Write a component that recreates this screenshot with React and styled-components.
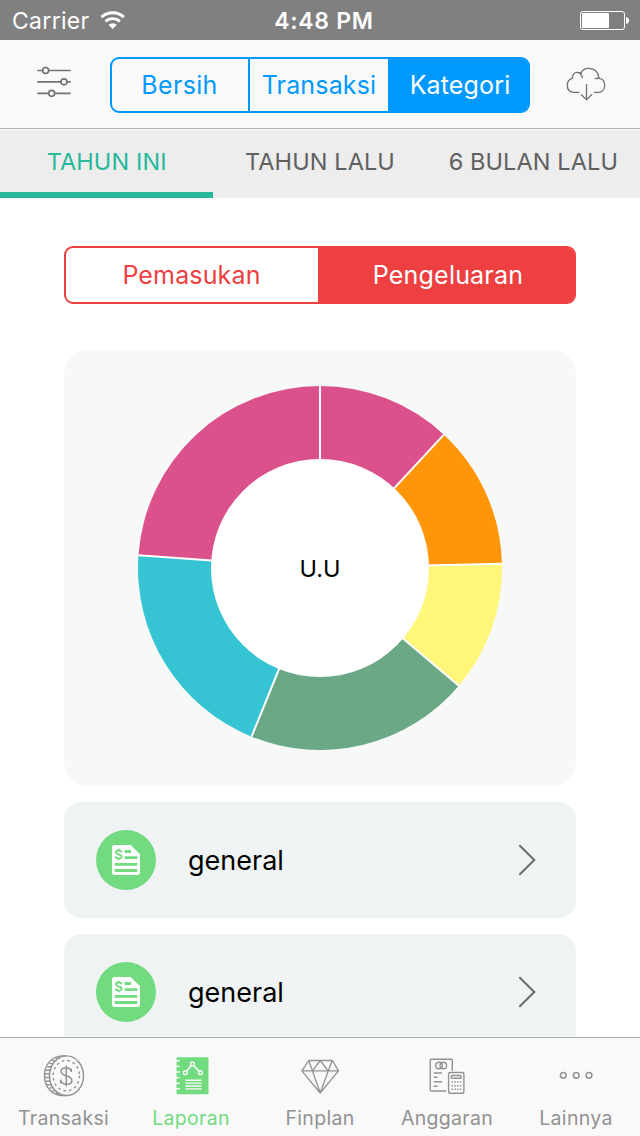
import React from "react";
import styled, { createGlobalStyle } from "styled-components";

const GlobalStyle = createGlobalStyle`
  * { box-sizing: border-box; }
  body { margin: 0; background: #fff; }
  button { font: inherit; background: none; border: 0; padding: 0; margin: 0; color: inherit; }
  svg { display: block; flex: none; }
`;

const Screen = styled.div`
  width: 640px;
  height: 1136px;
  display: flex;
  flex-direction: column;
  overflow: hidden;
  background: #fff;
  font-family: Inter, "Liberation Sans", sans-serif;
  font-weight: 400;
`;

const StatusBar = styled.header`
  flex: none;
  height: 40px;
  padding: 0 11px 0 12px;
  display: grid;
  grid-template-columns: 1fr auto 1fr;
  align-items: center;
  background: #808080;
  color: #fff;
  font-size: 23px;
  line-height: 38px;
`;

const Carrier = styled.div`
  display: flex;
  align-items: center;
  gap: 10px;
  letter-spacing: 0.3px;
  & > span { padding-top: 2px; }
`;

const Clock = styled.div`
  padding: 2px 0 0 7px;
  font-weight: 600;
  letter-spacing: 0.7px;
`;

const BatterySlot = styled.div`
  justify-self: end;
`;

const NavBar = styled.nav`
  flex: none;
  height: 89px;
  padding: 17px 33px 0 36px;
  display: flex;
  align-items: flex-start;
  background: #f9f9f9;
  border-bottom: 1px solid #b2b2b2;
`;

const IconButton = styled.button`
  margin-top: ${(p) => p.$top}px;
  &:first-child { margin-right: 38px; }
  &:last-child { margin-left: auto; }
`;

const Segments = styled.div`
  flex: none;
  display: flex;
  width: ${(p) => p.$width}px;
  height: ${(p) => p.$height}px;
  border: 2px solid ${(p) => p.$color};
  border-radius: 9px;
  color: ${(p) => p.$color};
  font-size: 25px;
`;

const Segment = styled.button`
  flex: none;
  width: ${(p) => p.$width}px;
  display: flex;
  align-items: center;
  justify-content: center;
  letter-spacing: ${(p) => p.$spacing || 0}px;
  padding-left: ${(p) => (p.$active ? 2 : 0)}px;
  background: ${(p) => (p.$active ? p.$color : "transparent")};
  color: ${(p) => (p.$active ? "#fff" : p.$color)};
  &:not(:first-child) { border-left: 2px solid ${(p) => p.$color}; }
  &:first-child { padding-right: 1px; }
  &:last-child { border-radius: 0 6px 6px 0; }
`;

const PeriodTabs = styled.div`
  flex: none;
  height: 69px;
  border-top: 1px solid #f9f9f9;
  display: grid;
  grid-template-columns: repeat(3, 1fr);
  background: #ededed;
`;

const PeriodTab = styled.button`
  height: 68px;
  padding: 1px 0 ${(p) => (p.$active ? 0 : 6)}px;
  border-bottom: ${(p) => (p.$active ? "6px solid #26b99a" : "0")};
  display: flex;
  align-items: center;
  justify-content: center;
  color: ${(p) => (p.$active ? "#26b99a" : "#606060")};
  font-size: 23.5px;
  letter-spacing: 0.1px;
`;

const Content = styled.main`
  flex: 1;
  min-height: 0;
  overflow: hidden;
  padding: 48px 64px 0;
  display: flex;
  flex-direction: column;
`;

const ChartCard = styled.section`
  flex: none;
  margin-top: 46px;
  height: 436px;
  border-radius: 24px;
  background: #f7f9f8;
  display: grid;
  place-items: center;
  & > * { grid-area: 1 / 1; }
`;

const ChartLabel = styled.div`
  padding-top: 1px;
  color: #000;
  font-size: 23.5px;
`;

const CategoryRow = styled.button`
  flex: none;
  height: 116px;
  margin-top: 16px;
  padding: 0 40px 0 32px;
  border-radius: 17px;
  background: #eff3f4;
  display: flex;
  align-items: center;
`;

const CategoryName = styled.span`
  flex: 1;
  margin-left: 32px;
  text-align: left;
  color: #000;
  font-size: 27px;
`;

const TabBar = styled.footer`
  flex: none;
  height: 99px;
  border-top: 1px solid #a9adae;
  background: #f9f9f9;
  display: grid;
  grid-template-columns: repeat(5, 1fr);
`;

const TabItem = styled.button`
  display: flex;
  flex-direction: column;
  align-items: center;
  padding-top: 16px;
  color: ${(p) => (p.$active ? "#72db80" : "#929292")};
`;

const TabLabel = styled.span`
  margin: 7px ${(p) => p.$trail || 0}px 0 0;
  font-size: 19.5px;
  line-height: 26px;
  letter-spacing: 0.32px;
`;

const WifiIcon = () => (
  <svg width="25.33" height="20" viewBox="0 0 76 60" fill="none" stroke="#fff">
    <path d="M4.3 21.5A49 49 0 0 1 71.7 21.5" strokeWidth="9" />
    <path d="M16.5 34.5A31 31 0 0 1 59.5 34.5" strokeWidth="8.5" />
    <path d="M38 57L25.5 44.5A18 18 0 0 1 50.5 44.5Z" fill="#fff" stroke="none" />
  </svg>
);

const BatteryIcon = () => (
  <svg width="49" height="20" viewBox="0 0 49 20">
    <rect x="0.5" y="1.5" width="44" height="18" rx="2.5" fill="none" stroke="#fff" />
    <rect x="2" y="3" width="27" height="15" rx="1" fill="#fff" />
    <path d="M46 7Q49 7.5 49 10.5Q49 13.5 46 14Z" fill="#fff" />
  </svg>
);

const SlidersIcon = () => (
  <svg width="36" height="33" viewBox="0 0 108 99" fill="none" stroke="#737373" strokeWidth="5">
    <path d="M4 13.500H20M38 13.500H104M4 47.500H75M93 47.500H104M4 82H38M56 82H104" />
    <circle cx="29" cy="13.500" r="9" />
    <circle cx="84" cy="47.500" r="9" />
    <circle cx="47" cy="82" r="9" />
  </svg>
);

const CloudIcon = () => (
  <svg width="42" height="37" viewBox="0 0 126 111" fill="none" stroke="#737373" strokeWidth="4" strokeLinecap="round">
    <path d="M42 82H27C14 82 7 73 7 61C7 49 13 42 22 40C22 29 29 21 37 22C41 22 45 23 48 25C52 14 61 10 71 10C89 10 101 22 102 40C112 41 119 49 119 61C119 73 112 82 101 82H88" />
    <path d="M37 22Q50 24 52 38M91 41Q97 39 103 40" />
    <path d="M64.500 59V103M49 89L64.500 104L80 89" />
  </svg>
);

const polar = (deg, r) => {
  const a = (deg * Math.PI) / 180;
  return `${(182 + r * Math.sin(a)).toFixed(2)} ${(182 - r * Math.cos(a)).toFixed(2)}`;
};

const slices = [
  { from: 0, to: 42.9, color: "#da518b" },
  { from: 42.9, to: 88.7, color: "#ff9508" },
  { from: 88.7, to: 130.3, color: "#fff67a" },
  { from: 130.3, to: 202.1, color: "#6aa886" },
  { from: 202.1, to: 274, color: "#36c3d3" },
  { from: 274, to: 360, color: "#da518b" },
];

const Donut = () => (
  <svg width="364" height="364" viewBox="0 0 364 364">
    {slices.map((s) => (
      <path
        key={s.from}
        fill={s.color}
        d={`M${polar(s.from, 108)}L${polar(s.from, 182)}A182 182 0 0 1 ${polar(s.to, 182)}L${polar(s.to, 108)}A108 108 0 0 0 ${polar(s.from, 108)}Z`}
      />
    ))}
    {slices.map((s) => (
      <path key={s.from} stroke="#fff" strokeWidth="2" d={`M${polar(s.from, 105)}L${polar(s.from, 182)}`} />
    ))}
    <circle cx="182" cy="182" r="109" fill="#fff" />
  </svg>
);

const BillIcon = () => (
  <svg width="60" height="60" viewBox="0 0 180 180">
    <circle cx="90" cy="90" r="90" fill="#72db80" />
    <path d="M55 45H104L132 73V127Q132 135 124 135H56Q48 135 48 127V53Q48 45 55 45Z" fill="#fff" />
    <path d="M86 64.500H105M86 83H124M56 103H124M56 121.500H124" stroke="#72db80" strokeWidth="8.500" />
    <path
      d="M77 67Q76 61.500 68 61.500Q60 61.500 60 67Q60 71.500 68 73.500Q77 75.500 77 80Q77 85.500 68 85.500Q59 85.500 58.500 79.500M68 56V61M68 86V91"
      fill="none"
      stroke="#72db80"
      strokeWidth="5.500"
    />
  </svg>
);

const ChevronIcon = () => (
  <svg width="18" height="32" viewBox="0 0 18 32" fill="none" stroke="#6b6b6b" strokeWidth="2" strokeLinecap="round">
    <path d="M1.900 1.700L16.300 16L1.900 30.300" />
  </svg>
);

const CoinIcon = () => (
  <svg width="44" height="44" viewBox="0 0 44 44" fill="none" stroke="currentColor" strokeWidth="1.400">
    <ellipse cx="24.500" cy="21.700" rx="17" ry="19.800" />
    <path d="M24.500 1.900H20C10 2.500 2.500 10 2.500 21.700S10 41 20 41.500H24.500" />
    <path d="M13.500 4.200L18 4.200M10 6.600L14.500 6.600M7.300 9.600L11.600 9.600M5.300 12.800L9.600 12.800M3.700 16.200L8.200 16.200M2.700 19.800L7.500 19.800M2.700 23.500L7.500 23.500M3.500 27.200L8.200 27.200M5 30.700L9.600 30.700M7.300 33.900L11.600 33.900M10 36.900L14.500 36.900M13.500 39.300L18 39.300" />
    <ellipse cx="24.300" cy="21.700" rx="13.200" ry="15.200" strokeDasharray="2.600 3.030" />
    <path d="M29.300 18V14.800M29.300 17.500C28.600 14.700 26.700 13.700 24.200 13.700C21 13.700 19 15.200 19 17.500C19 20.200 21.500 20.900 24.200 21.700C27.500 22.600 29.900 23.500 29.900 26.400C29.900 28.900 27.600 30.300 24.500 30.300C21.300 30.300 19.300 28.900 18.700 25.900M18.700 25.600V29.600M24.300 11.700V32.200" strokeWidth="1.500" />
  </svg>
);

const ReportIcon = () => (
  <svg width="44" height="44" viewBox="0 0 44 44" fill="none" stroke="#f9f9f9" strokeWidth="1.400">
    <rect x="6.500" y="3.300" width="32" height="37" rx="0.800" fill="currentColor" stroke="none" />
    <path d="M6 6.800H9.200M6 12.400H9.200M6 18H9.200M6 23.600H9.200M6 29.200H9.200M6 34.800H9.200" strokeLinecap="round" />
    <path d="M16.500 17.300L21.200 11.500M23.600 11.300L29 17.300" strokeWidth="1.700" />
    <circle cx="15.300" cy="18.700" r="1.900" />
    <circle cx="22.400" cy="9.900" r="1.900" />
    <circle cx="30.500" cy="18.700" r="1.900" />
    <path d="M15.300 26.200H31.700M15.300 29.100H31.700M15.300 32H31.700M15.300 34.900H31.700" />
  </svg>
);

const DiamondIcon = () => (
  <svg width="44" height="44" viewBox="0 0 44 44" fill="none" stroke="currentColor" strokeWidth="1.300" strokeLinejoin="round">
    <path d="M10.700 6.500H34.300L40.500 16.800L22.200 39L3.900 16.800ZM3.900 16.800H40.500M10.700 6.500L14.400 16.800L22.300 6.500L30.300 16.800L34.300 6.500M14.400 16.800L22.200 39L30.300 16.800" />
  </svg>
);

const BudgetIcon = () => (
  <svg width="44" height="44" viewBox="0 0 44 44" fill="none" stroke="currentColor" strokeWidth="1.400">
    <path d="M26.300 17V6.500Q26.300 5.300 25.100 5.300H5.400Q4.200 5.300 4.200 6.500V35.800Q4.200 37 5.400 37H20" />
    <circle cx="13" cy="11.500" r="3.300" />
    <circle cx="17.300" cy="11.500" r="3.300" />
    <path d="M7.700 19H16M7.700 23.300H11.700M7.700 27.700H16M7.700 32.300H11.700" />
    <rect x="22.600" y="18.500" width="15.300" height="20.700" rx="1.500" />
    <rect x="25.300" y="21.500" width="9.800" height="2.800" rx="0.800" />
    <path d="M25.500 28H36M25.500 31.700H36M25.500 35.300H36" strokeWidth="1.500" strokeDasharray="1.500 1.300" />
  </svg>
);

const MoreIcon = () => (
  <svg width="44" height="44" viewBox="0 0 44 44" fill="none" stroke="currentColor" strokeWidth="1.500">
    <circle cx="9.300" cy="21.300" r="2.900" />
    <circle cx="22.200" cy="21.300" r="2.900" />
    <circle cx="35" cy="21.300" r="2.900" />
  </svg>
);

const BLUE = "#0099ff";
const RED = "#ee4041";

const tabs = [
  { label: "Transaksi", Icon: CoinIcon, trail: 1 },
  { label: "Laporan", Icon: ReportIcon, trail: 2, active: true },
  { label: "Finplan", Icon: DiamondIcon },
  { label: "Anggaran", Icon: BudgetIcon, trail: 2 },
  { label: "Lainnya", Icon: MoreIcon },
];

export default function App() {
  return (
    <Screen>
      <GlobalStyle />
      <StatusBar>
        <Carrier>
          <span>Carrier</span>
          <WifiIcon />
        </Carrier>
        <Clock>4:48 PM</Clock>
        <BatterySlot>
          <BatteryIcon />
        </BatterySlot>
      </StatusBar>
      <NavBar>
        <IconButton $top={9} aria-label="Filter">
          <SlidersIcon />
        </IconButton>
        <Segments $width={420} $height={56} $color={BLUE}>
          <Segment $color={BLUE} $width={136} $spacing={0.35}>Bersih</Segment>
          <Segment $color={BLUE} $width={140} $spacing={0.15}>Transaksi</Segment>
          <Segment $color={BLUE} $width={140} $spacing={0.15} $active>Kategori</Segment>
        </Segments>
        <IconButton $top={8} aria-label="Unduh">
          <CloudIcon />
        </IconButton>
      </NavBar>
      <PeriodTabs>
        <PeriodTab $active>TAHUN INI</PeriodTab>
        <PeriodTab>TAHUN LALU</PeriodTab>
        <PeriodTab>6 BULAN LALU</PeriodTab>
      </PeriodTabs>
      <Content>
        <Segments $width={512} $height={58} $color={RED}>
          <Segment $color={RED} $width={252} $spacing={0.15}>Pemasukan</Segment>
          <Segment $color={RED} $width={256} $spacing={0.2} $active>Pengeluaran</Segment>
        </Segments>
        <ChartCard>
          <Donut />
          <ChartLabel>U.U</ChartLabel>
        </ChartCard>
        <CategoryRow>
          <BillIcon />
          <CategoryName>general</CategoryName>
          <ChevronIcon />
        </CategoryRow>
        <CategoryRow>
          <BillIcon />
          <CategoryName>general</CategoryName>
          <ChevronIcon />
        </CategoryRow>
      </Content>
      <TabBar>
        {tabs.map(({ label, Icon, trail, active }) => (
          <TabItem key={label} $active={active}>
            <Icon />
            <TabLabel $trail={trail}>{label}</TabLabel>
          </TabItem>
        ))}
      </TabBar>
    </Screen>
  );
}
